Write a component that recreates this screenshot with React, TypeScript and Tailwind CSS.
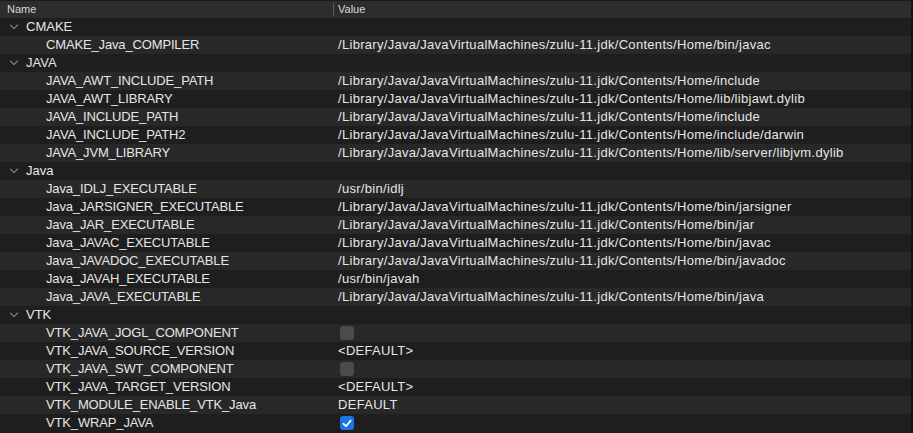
import React from "react";

type Row =
  | { kind: "group"; label: string }
  | { kind: "item"; name: string; value?: string; check?: "on" | "off" };

const P = "/Library/Java/JavaVirtualMachines/zulu-11.jdk/Contents/Home";

const rows: Row[] = [
  { kind: "group", label: "CMAKE" },
  { kind: "item", name: "CMAKE_Java_COMPILER", value: `${P}/bin/javac` },
  { kind: "group", label: "JAVA" },
  { kind: "item", name: "JAVA_AWT_INCLUDE_PATH", value: `${P}/include` },
  { kind: "item", name: "JAVA_AWT_LIBRARY", value: `${P}/lib/libjawt.dylib` },
  { kind: "item", name: "JAVA_INCLUDE_PATH", value: `${P}/include` },
  { kind: "item", name: "JAVA_INCLUDE_PATH2", value: `${P}/include/darwin` },
  { kind: "item", name: "JAVA_JVM_LIBRARY", value: `${P}/lib/server/libjvm.dylib` },
  { kind: "group", label: "Java" },
  { kind: "item", name: "Java_IDLJ_EXECUTABLE", value: "/usr/bin/idlj" },
  { kind: "item", name: "Java_JARSIGNER_EXECUTABLE", value: `${P}/bin/jarsigner` },
  { kind: "item", name: "Java_JAR_EXECUTABLE", value: `${P}/bin/jar` },
  { kind: "item", name: "Java_JAVAC_EXECUTABLE", value: `${P}/bin/javac` },
  { kind: "item", name: "Java_JAVADOC_EXECUTABLE", value: `${P}/bin/javadoc` },
  { kind: "item", name: "Java_JAVAH_EXECUTABLE", value: "/usr/bin/javah" },
  { kind: "item", name: "Java_JAVA_EXECUTABLE", value: `${P}/bin/java` },
  { kind: "group", label: "VTK" },
  { kind: "item", name: "VTK_JAVA_JOGL_COMPONENT", check: "off" },
  { kind: "item", name: "VTK_JAVA_SOURCE_VERSION", value: "<DEFAULT>" },
  { kind: "item", name: "VTK_JAVA_SWT_COMPONENT", check: "off" },
  { kind: "item", name: "VTK_JAVA_TARGET_VERSION", value: "<DEFAULT>" },
  { kind: "item", name: "VTK_MODULE_ENABLE_VTK_Java", value: "DEFAULT" },
  { kind: "item", name: "VTK_WRAP_JAVA", check: "on" },
];

function Chevron() {
  return (
    <svg width="10" height="6" viewBox="0 0 10 6" className="shrink-0">
      <path d="M1.5 1 L5 4.6 L8.5 1" fill="none" stroke="#858585" strokeWidth="1.1" strokeLinecap="round" strokeLinejoin="round" />
    </svg>
  );
}

function Check({ on }: { on: boolean }) {
  if (on)
    return (
      <div className="w-[14px] h-[14px] rounded-[3px] bg-[#1b74e4] flex items-center justify-center">
        <svg width="10" height="9" viewBox="0 0 10 9">
          <path d="M1.5 4.8 L4 7.2 L8.6 1.6" fill="none" stroke="#ffffff" strokeWidth="1.8" strokeLinecap="round" strokeLinejoin="round" />
        </svg>
      </div>
    );
  return <div className="w-[14px] h-[14px] rounded-[3px] bg-[#4b4b4b]" />;
}

export default function App() {
  return (
    <div
      className="w-[913px] h-[433px] bg-[#1e1e1e] text-[#e6e6e6] overflow-hidden flex flex-col border-r-2 border-[#141414]"
      style={{ fontFamily: '"Liberation Sans", Arial, sans-serif' }}
    >
      <div className="h-[1px] bg-[#1a1a1a] shrink-0" />
      <div className="h-[17px] shrink-0 bg-[#2d2d2d] flex items-center text-[11px] text-[#d8d8d8]">
        <div className="w-[333px] pl-[7px] shrink-0">Name</div>
        <div className="w-[1px] h-[13px] bg-[#5c5c5c] shrink-0" />
        <div className="pl-[4px]">Value</div>
      </div>
      {rows.map((r, i) => (
        <div
          key={i}
          className={`h-[18px] shrink-0 flex items-center text-[13px] ${i % 2 === 0 ? "bg-[#1e1e1e]" : "bg-[#282828]"}`}
        >
          {r.kind === "group" ? (
            <div className="flex items-center pl-[9px] gap-[7px]">
              <Chevron />
              <span>{r.label}</span>
            </div>
          ) : (
            <>
              <div className="w-[338px] pl-[46px] shrink-0 whitespace-nowrap tracking-[-0.15px]">{r.name}</div>
              <div className="whitespace-nowrap tracking-[0.3px]">
                {r.check ? (
                  <div className="pl-[2px]">
                    <Check on={r.check === "on"} />
                  </div>
                ) : (
                  r.value
                )}
              </div>
            </>
          )}
        </div>
      ))}
    </div>
  );
}
